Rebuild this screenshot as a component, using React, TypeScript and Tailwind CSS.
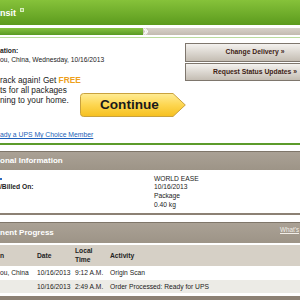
import React from "react";

const font = "font-['Liberation_Sans',Arial,Helvetica,sans-serif]";

function ContinueButton() {
  return (
    <div className="relative w-[106px] h-[24px] shrink-0 mt-[17px] flex items-center">
      <svg className="absolute inset-0" width="106" height="24" viewBox="0 0 106 24">
        <defs>
          <linearGradient id="cg" x1="0" y1="0" x2="0" y2="1">
            <stop offset="0" stopColor="#ffec95" />
            <stop offset="0.5" stopColor="#fdd650" />
            <stop offset="1" stopColor="#f6c01f" />
          </linearGradient>
        </defs>
        <path
          d="M3.5,0.5 H93 L105.3,12 L93,23.5 H3.5 Q0.5,23.5 0.5,20.5 V3.5 Q0.5,0.5 3.5,0.5 Z"
          fill="url(#cg)"
          stroke="#c9a23e"
          strokeWidth="1"
        />
      </svg>
      <span className="relative pl-[20px] text-[13.6px] leading-[14px] font-bold text-[#1a1a1a] whitespace-nowrap">
        Continue
      </span>
    </div>
  );
}

function GrayButton({ label, h }: { label: string; h: string }) {
  return (
    <div
      className={`${h} w-[140px] flex items-center justify-center border border-[#7e766d] bg-gradient-to-b from-[#f4f2ef] to-[#c4bdb3] text-[6.8px] font-bold text-[#3d2214] whitespace-nowrap`}
    >
      {label}
    </div>
  );
}

export default function App() {
  return (
    <div className={`w-[300px] h-[300px] overflow-hidden bg-white ${font} text-[#222]`}>
      {/* top green header */}
      <div className="h-[25px] flex items-center bg-gradient-to-b from-[#86c23a] to-[#5c9b1d]">
        <span className="text-[9px] leading-[10px] font-bold text-white whitespace-nowrap">nsit</span>
        <span className="ml-[4px] -mt-[5px] w-[4px] h-[4px] border border-[#d8ecbf] bg-[#9acb60]" />
      </div>

      {/* progress bar */}
      <div className="mt-[3px] h-[7px] flex">
        <div className="w-[143px] bg-gradient-to-b from-[#86c23f] to-[#589a22]" />
        <svg width="5" height="7" viewBox="0 0 5 7" className="shrink-0 bg-[#cfc8be]">
          <polyline points="0.5,0.5 3,3.5 0.5,6.5" fill="none" stroke="#ffffff" strokeWidth="1.1" />
          <polyline points="2.2,0.5 4.7,3.5 2.2,6.5" fill="none" stroke="#ffffff" strokeWidth="1.1" />
        </svg>
        <div className="flex-1 bg-gradient-to-b from-[#d8d2ca] to-[#c3bbb0]" />
      </div>
      <div className="mt-[2px] h-[1px] bg-[#bcdc9e]" />

      {/* main section */}
      <div className="h-[105px] flex">
        <div className="w-[185px] shrink-0 flex flex-col">
          <div className="pt-[9px] text-[6.7px] leading-[8.5px] font-bold whitespace-nowrap">ation:</div>
          <div className="text-[6.7px] leading-[8.5px] whitespace-nowrap">ou, China, Wednesday, 10/16/2013</div>
          <div className="mt-[12px] flex">
            <div className="w-[80px] shrink-0 text-[8.3px] leading-[9.8px] whitespace-nowrap">
              <div>
                rack again! Get <span className="font-bold text-[#eda01c]">FREE</span>
              </div>
              <div>ts for all packages</div>
              <div>ning to your home.</div>
            </div>
            <ContinueButton />
          </div>
          <div className="mt-[14px] text-[6.8px] leading-[8px] text-[#1d5fb8] underline whitespace-nowrap">
            ady a UPS My Choice Member
          </div>
        </div>
        <div className="w-[140px] shrink-0 pt-[5px] flex flex-col gap-[1px]">
          <GrayButton label="Change Delivery »" h="h-[19px]" />
          <GrayButton label="Request Status Updates »" h="h-[18px]" />
        </div>
      </div>

      {/* green divider */}
      <div className="h-[2px] bg-[#5c9b2b]" />

      {/* Additional information header */}
      <div className="mt-[6px] h-[19px] flex items-center border-t border-[#7f766a] bg-gradient-to-b from-[#aaa195] to-[#9d9487]">
        <span className="text-[8px] font-bold text-white whitespace-nowrap">onal Information</span>
      </div>

      {/* info rows */}
      <div className="mt-[4.6px] grid grid-cols-[154px_1fr] text-[6.7px] leading-[8.7px]">
        <div className="flex items-center">
          <span className="w-[2px] h-[2px] bg-[#2a6cc4]" />
        </div>
        <div className="whitespace-nowrap">WORLD EASE</div>
        <div className="font-bold whitespace-nowrap">/Billed On:</div>
        <div>10/16/2013</div>
        <div />
        <div>Package</div>
        <div />
        <div>0.40 kg</div>
      </div>

      <div className="mt-[3.8px] h-[2px] bg-[#8c8174]" />

      {/* shipment progress header */}
      <div className="mt-[7px] h-[21px] flex border-t border-[#7f766a] bg-gradient-to-b from-[#aaa195] to-[#9d9487]">
        <span className="w-[280px] shrink-0 self-center text-[8px] font-bold text-white whitespace-nowrap">
          nent Progress
        </span>
        <span className="pt-[3px] text-[6.3px] leading-[8px] text-[#f3efe9] underline whitespace-nowrap">
          What&apos;s
        </span>
      </div>

      {/* table */}
      <div className="mt-[2px] text-[6.7px]">
        <div className="h-[21px] flex items-center bg-[#d6d0c6] font-bold">
          <div className="w-[37px] shrink-0">n</div>
          <div className="w-[38px] shrink-0">Date</div>
          <div className="w-[35px] shrink-0 leading-[8.3px]">
            Local
            <br />
            Time
          </div>
          <div>Activity</div>
        </div>
        <div className="h-[14px] flex items-center bg-white whitespace-nowrap">
          <div className="w-[37px] shrink-0">ou, China</div>
          <div className="w-[38px] shrink-0">10/16/2013</div>
          <div className="w-[35px] shrink-0">9:12 A.M.</div>
          <div>Origin Scan</div>
        </div>
        <div className="h-[13px] flex items-center bg-[#ecebe6] whitespace-nowrap">
          <div className="w-[37px] shrink-0" />
          <div className="w-[38px] shrink-0">10/16/2013</div>
          <div className="w-[35px] shrink-0">2:49 A.M.</div>
          <div>Order Processed: Ready for UPS</div>
        </div>
      </div>

      <div className="mt-[3px] h-[4px] bg-[#8c8174]" />
    </div>
  );
}
